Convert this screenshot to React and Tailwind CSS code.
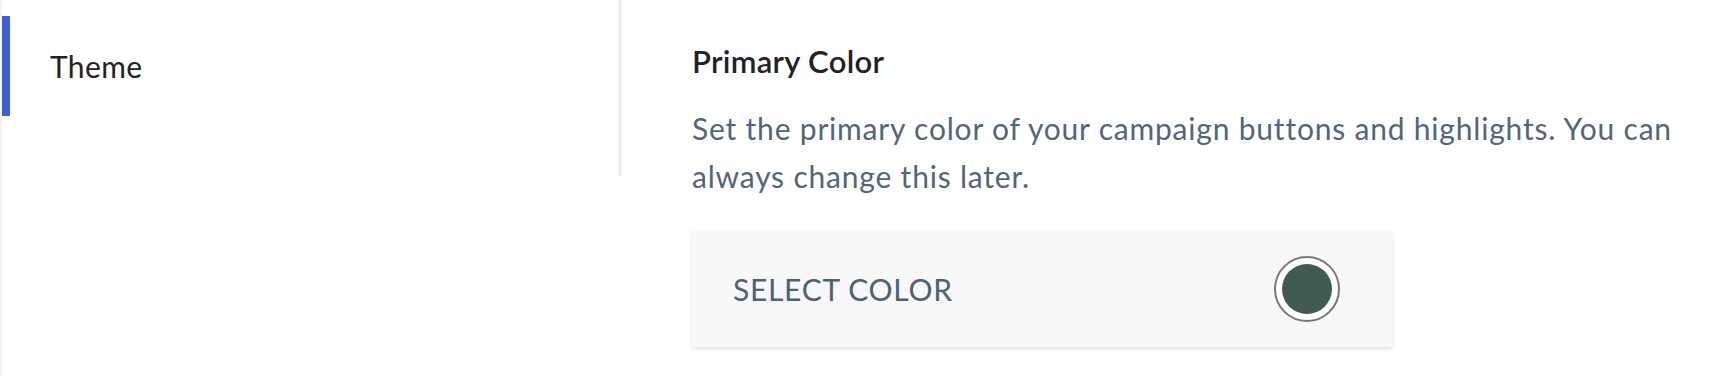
import React from 'react';

const SwatchButton = ({ color }) => (
  <span className="flex h-[66px] w-[66px] items-center justify-center rounded-full border-2 border-[#777777] bg-white">
    <span className="h-[50px] w-[50px] rounded-full" style={{ backgroundColor: color }} />
  </span>
);

export default function App() {
  return (
    <div className="flex min-h-[376px] border-l-2 border-[#f4f4f4] bg-white font-['Lato',sans-serif]">
      {/* Sidebar */}
      <aside className="h-[176px] w-[620px] shrink-0 border-r-4 border-[#f0f0f0] pt-[16px]">
        <div className="flex h-[100px] items-center border-l-8 border-[#3f5fd6] pl-[40px] text-[30px] tracking-[0.4px] text-[#222222]">
          Theme
        </div>
      </aside>

      {/* Settings */}
      <main className="flex-1 pl-[70px] pt-[41px]">
        <h2 className="text-[31px] font-semibold leading-[40px] tracking-[0.3px] text-[#222222]">Primary Color</h2>
        <p className="mt-[23px] w-[1010px] text-[30px] leading-[48px] tracking-[0.8px] text-[#53657d]">
          Set the primary color of your campaign buttons and highlights. You can always change this later.
        </p>
        <button
          type="button"
          className="mt-[31px] flex h-[116px] w-[700px] items-center justify-between bg-[#f8f8f8] pl-[41px] pr-[52px] shadow-[0_2px_4px_rgba(0,0,0,0.12)]"
        >
          <span className="text-[30px] uppercase tracking-[0.7px] text-[#4e617a]">Select color</span>
          <SwatchButton color="#3f5a52" />
        </button>
      </main>
    </div>
  );
}
